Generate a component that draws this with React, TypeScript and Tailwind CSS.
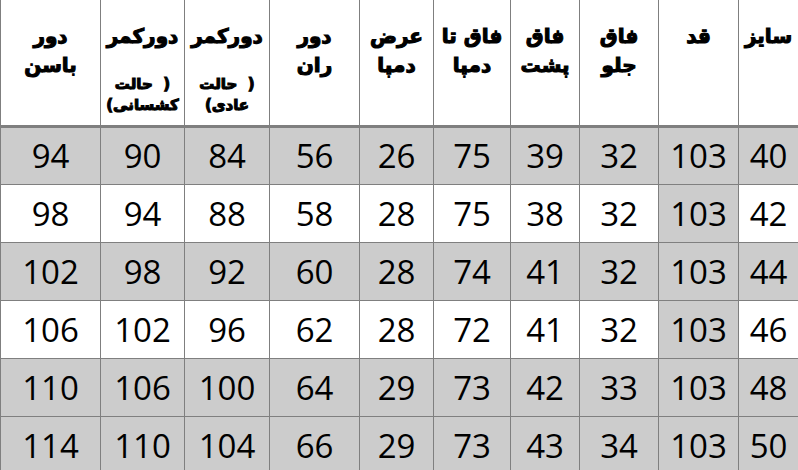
import React from 'react';

type Row = {
  values: number[];
  shaded: 'all' | 'qad' | 'none';
};

// ستون‌ها از راست به چپ
const widths = [60, 80, 79, 69, 77, 74, 90, 85, 84, 100];

const rows: Row[] = [
  { values: [40, 103, 32, 39, 75, 26, 56, 84, 90, 94], shaded: 'all' },
  { values: [42, 103, 32, 38, 75, 28, 58, 88, 94, 98], shaded: 'qad' },
  { values: [44, 103, 32, 41, 74, 28, 60, 92, 98, 102], shaded: 'all' },
  { values: [46, 103, 32, 41, 72, 28, 62, 96, 102, 106], shaded: 'qad' },
  { values: [48, 103, 33, 42, 73, 29, 64, 100, 106, 110], shaded: 'all' },
  { values: [50, 103, 34, 43, 73, 29, 66, 104, 110, 114], shaded: 'all' },
];

function HeaderCell({ lines, sub }: { lines: string[]; sub?: string }) {
  return (
    <th
      className="border border-[#7f7f7f] border-t-0 border-b-[3px] align-top pt-[22px] px-1 font-bold text-black"
      style={{ WebkitTextStroke: '1.1px black' }}
    >
      {lines.map((l, i) => (
        <div key={i} className="text-[20px] leading-[29px]">
          {l}
        </div>
      ))}
      {sub && (
        <div className="mt-[23px] text-[15px] leading-[21px]">
          <div dir="ltr">
            <span>حالت</span>&nbsp; )
          </div>
          <div dir="ltr">
            (<span>{sub}</span>
          </div>
        </div>
      )}
    </th>
  );
}

export default function App() {
  return (
    <div className="w-[798px] h-[470px] overflow-hidden bg-white">
      <table
        dir="rtl"
        className="table-fixed border-collapse w-[798px]"
        style={{ fontFamily: '"DejaVu Sans", "Noto Sans", sans-serif' }}
      >
        <colgroup>
          {widths.map((w, i) => (
            <col key={i} style={{ width: w }} />
          ))}
        </colgroup>
        <thead>
          <tr className="h-[126px]">
            <HeaderCell lines={['سایز']} />
            <HeaderCell lines={['قد']} />
            <HeaderCell lines={['فاق', 'جلو']} />
            <HeaderCell lines={['فاق', 'پشت']} />
            <HeaderCell lines={['فاق تا', 'دمپا']} />
            <HeaderCell lines={['عرض', 'دمپا']} />
            <HeaderCell lines={['دور', 'ران']} />
            <HeaderCell lines={['دورکمر']} sub="عادی" />
            <HeaderCell lines={['دورکمر']} sub="کشسانی" />
            <HeaderCell lines={['دور', 'باسن']} />
          </tr>
        </thead>
        <tbody>
          {rows.map((r, ri) => (
            <tr key={ri} className="h-[58px]">
              {r.values.map((v, ci) => {
                const gray = r.shaded === 'all' || (r.shaded === 'qad' && ci === 1);
                return (
                  <td
                    key={ci}
                    className={`border border-[#7f7f7f] text-center align-middle text-[33px] leading-none text-black p-0 ${
                      gray ? 'bg-[#cccccc]' : 'bg-white'
                    }`}
                    style={{ fontFamily: '"Open Sans", sans-serif' }}
                  >
                    {v}
                  </td>
                );
              })}
            </tr>
          ))}
        </tbody>
      </table>
    </div>
  );
}
